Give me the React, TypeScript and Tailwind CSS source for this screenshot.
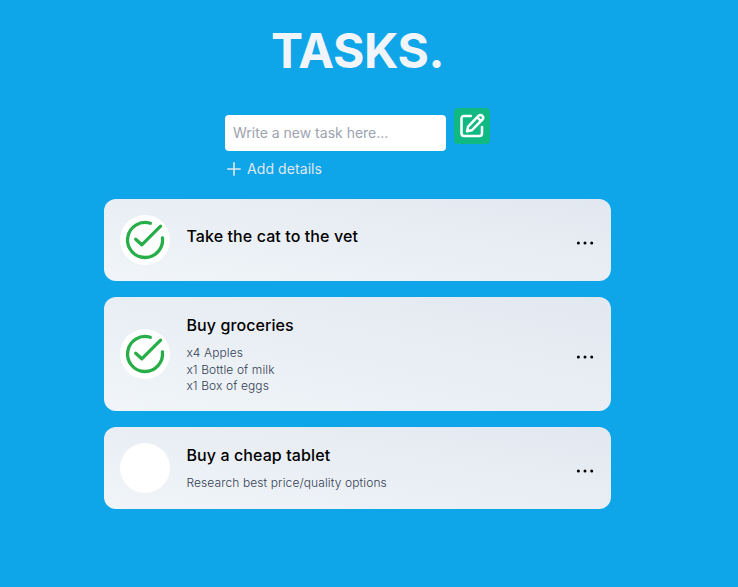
import React from "react";

type Task = { title: string; details?: string[]; done: boolean };

const tasks: Task[] = [
  { title: "Take the cat to the vet", done: true },
  { title: "Buy groceries", details: ["x4 Apples", "x1 Bottle of milk", "x1 Box of eggs"], done: true },
  { title: "Buy a cheap tablet", details: ["Research best price/quality options"], done: false },
];

function CheckIcon() {
  return (
    <svg viewBox="0 0 50 50" className="size-[50px]" fill="none" stroke="#28ae48" strokeWidth="3.3" strokeLinecap="round" strokeLinejoin="round">
      <path d="M30.3 8.3A17.5 17.5 0 1 0 42.4 22.8" />
      <path d="M15.7 24.2 21.8 29.8 40.6 11.2" />
    </svg>
  );
}

function EditIcon() {
  return (
    <svg viewBox="0 0 36 36" className="size-9" fill="none" stroke="white" strokeWidth="2.5" strokeLinecap="round" strokeLinejoin="round">
      <path d="M16.8 7.9H9.9a2.4 2.4 0 0 0-2.4 2.4V25.6a2.4 2.4 0 0 0 2.4 2.4H25.6a2.4 2.4 0 0 0 2.4-2.4V19" />
      <path d="M13 23.3 14.1 18.6 24.7 7.7a2.7 2.7 0 0 1 3.8 3.8L17.7 22.3ZM23.6 9.6 26.6 12.6" />
    </svg>
  );
}

function MoreIcon() {
  return (
    <svg viewBox="0 0 20 6" className="h-1.5 w-5" fill="black">
      <circle cx="3.4" cy="3" r="1.5" />
      <circle cx="10" cy="3" r="1.5" />
      <circle cx="16.7" cy="3" r="1.5" />
    </svg>
  );
}

function TaskCard({ task }: { task: Task }) {
  return (
    <li className="flex items-center rounded-xl bg-linear-to-tr from-[#f1f5f9] to-[#e2e8f0] p-4">
      <button className="flex size-[50px] shrink-0 items-center justify-center rounded-full bg-white">
        {task.done && <CheckIcon />}
      </button>
      <div className="ml-4 flex-1 pl-[0.4px]">
        <h2 className="mb-2 text-base font-medium tracking-[0.1px] text-black">{task.title}</h2>
        {task.details && (
          <div className="text-xs leading-[16.5px] font-light tracking-[0.11px] text-[#334155]">
            {task.details.map((line) => (
              <p key={line}>{line}</p>
            ))}
          </div>
        )}
      </div>
      <button className="mt-1.5 flex shrink-0">
        <MoreIcon />
      </button>
    </li>
  );
}

export default function App() {
  return (
    <main className="min-h-screen bg-[#0ea5e9] pt-[27px] pl-[104px] font-['Inter',sans-serif]">
      <div className="w-[507px]">
        <h1 className="text-center text-5xl font-bold tracking-[-0.5px] text-[#f1f5f9]">TASKS.</h1>
        <form className="mt-[33px] flex justify-center gap-2">
          <div className="mt-[7px] w-[221px]">
            <input
              placeholder="Write a new task here..."
              className="block h-9 w-full rounded-sm bg-white px-2 pb-px text-sm outline-none placeholder:text-[#9ca3af]"
            />
            <button type="button" className="mt-2 flex h-5 items-center text-sm tracking-[0.08px] text-[#e2e8f0]">
              <svg viewBox="0 0 18 18" className="mr-1 size-[18px]" fill="none" stroke="currentColor" strokeWidth="1.6" strokeLinecap="round">
                <path d="M9 2.8v12.4M2.8 9h12.4" />
              </svg>
              Add details
            </button>
          </div>
          <button type="button" className="size-9 rounded-sm bg-[#10b981]">
            <EditIcon />
          </button>
        </form>
        <ul className="mt-5 flex flex-col gap-4">
          {tasks.map((task) => (
            <TaskCard key={task.title} task={task} />
          ))}
        </ul>
      </div>
    </main>
  );
}
